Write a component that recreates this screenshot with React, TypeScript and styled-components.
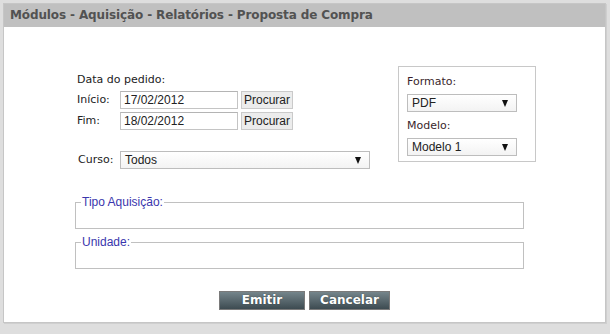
import React from 'react';
import styled, { createGlobalStyle } from 'styled-components';

const GlobalStyle = createGlobalStyle`
    html, body {
        margin: 0;
        padding: 0;
    }

    body {
        width: 610px;
        height: 334px;
        overflow: hidden;
        background: #dedede;
    }
`;

const Frame = styled.div`
    padding: 3px 4px 0 3px;
`;

const Window = styled.div`
    width: 601px;
    height: 318px;

    background: #fff;
    border: 1px solid #c6c6c6;
    box-shadow: 1px 1px 0 #cfcfcf;
`;

const Header = styled.header`
    height: 23px;
    padding-left: 6px;

    background: #c0c0c0;

    font-family: "DejaVu Sans", Verdana, sans-serif;
    font-weight: bold;
    font-size: 12px;
    letter-spacing: -0.12px;
    line-height: 23px;
    color: #525252;
`;

const Body = styled.div`
    padding-top: 39px;
`;

const TopRow = styled.div`
    display: flex;
    align-items: flex-start;
    gap: 28px;

    padding-left: 73px;
`;

const LeftColumn = styled.div`
    width: 293px;
    margin-top: 7px;
`;

const Label = styled.div<{ $tone?: string }>`
    font-family: "DejaVu Sans", Verdana, sans-serif;
    font-size: 11px;
    line-height: 14px;
    color: ${props => props.$tone || '#222'};
`;

const DateRow = styled.div<{ $gap: number }>`
    display: flex;
    align-items: center;

    height: 18px;
    margin-top: ${props => props.$gap}px;
`;

const RowLabel = styled(Label)`
    width: 43px;
    flex: none;
`;

const TextInput = styled.div`
    box-sizing: border-box;
    width: 118px;
    height: 18px;
    padding-left: 3px;

    background: #fff;
    border: 1px solid #c4c4c4;
    border-top-color: #b4b4b4;

    font-family: "Liberation Sans", Arial, sans-serif;
    font-size: 12px;
    line-height: 16px;
    color: #222;
`;

const SearchButton = styled.div`
    box-sizing: border-box;
    width: 52px;
    height: 18px;
    margin-left: 3px;

    background: #ececec;
    border: 1px solid #cacaca;

    font-family: "Liberation Sans", Arial, sans-serif;
    font-size: 12px;
    line-height: 16px;
    text-align: center;
    color: #222;
`;

const SelectBox = styled.div<{ $width: number }>`
    box-sizing: border-box;
    display: flex;
    align-items: center;
    justify-content: space-between;

    width: ${props => props.$width}px;
    height: 18px;
    padding: 0 8px 0 4px;

    background: linear-gradient(#fff, #f3f3f3);
    border: 1px solid #bdbdbd;

    font-family: "Liberation Sans", Arial, sans-serif;
    font-size: 12px;
    color: #222;
`;

const Arrow = styled.span`
    width: 0;
    height: 0;

    border-left: 3.5px solid transparent;
    border-right: 3.5px solid transparent;
    border-top: 7px solid #111;
`;

const CourseRow = styled(DateRow)`
    padding-left: 1px;
`;

const CourseLabel = styled(RowLabel)`
    width: 42px;
`;

const OptionsBox = styled.div`
    box-sizing: border-box;
    width: 138px;
    height: 96px;
    padding: 8px 0 0 8px;

    border: 1px solid #c8c8c8;
`;

const OptionsLabel = styled(Label)`
    margin-bottom: 5px;
`;

const OptionsGap = styled.div`
    height: 7px;
`;

const Groups = styled.div`
    display: flex;
    flex-direction: column;
    gap: 6px;

    margin-top: 26px;
    padding-left: 71px;
`;

const Group = styled.fieldset`
    box-sizing: border-box;
    width: 449px;
    margin: 0;
    padding: 0 5px;

    border: 1px solid #c0c0c0;
`;

const GroupLegend = styled.legend`
    padding: 0 1px;

    font-family: "Liberation Sans", Arial, sans-serif;
    font-size: 12px;
    line-height: 14px;
    color: #3a36ad;
`;

const GroupContent = styled.div`
    height: 19px;
`;

const Actions = styled.div`
    display: flex;
    justify-content: center;
    gap: 4px;

    margin-top: 22px;
`;

const ActionButton = styled.button<{ $width: number }>`
    box-sizing: border-box;
    width: ${props => props.$width}px;
    height: 19px;
    padding: 0;

    background: linear-gradient(#75858b, #3d4b51);
    border: 1px solid #7a7a7a;

    font-family: "DejaVu Sans", Verdana, sans-serif;
    font-weight: bold;
    font-size: 12px;
    line-height: 17px;
    color: #fff;
    text-shadow: 0 0 1px #2a3538;
`;

const dates = [
    { label: 'Início:', value: '17/02/2012', gap: 4 },
    { label: 'Fim:', value: '18/02/2012', gap: 3 },
];

const App: React.FC = () => {
    return (
        <>
            <GlobalStyle />
            <Frame>
                <Window>
                    <Header>Módulos - Aquisição - Relatórios - Proposta de Compra</Header>
                    <Body>
                        <TopRow>
                            <LeftColumn>
                                <Label>Data do pedido:</Label>
                                {dates.map(date => (
                                    <DateRow key={date.label} $gap={date.gap}>
                                        <RowLabel>{date.label}</RowLabel>
                                        <TextInput>{date.value}</TextInput>
                                        <SearchButton>Procurar</SearchButton>
                                    </DateRow>
                                ))}
                                <CourseRow $gap={21}>
                                    <CourseLabel>Curso:</CourseLabel>
                                    <SelectBox $width={250}>
                                        Todos
                                        <Arrow />
                                    </SelectBox>
                                </CourseRow>
                            </LeftColumn>
                            <OptionsBox>
                                <OptionsLabel $tone="#3a1f2c">Formato:</OptionsLabel>
                                <SelectBox $width={110}>
                                    PDF
                                    <Arrow />
                                </SelectBox>
                                <OptionsGap />
                                <OptionsLabel $tone="#3a1f2c">Modelo:</OptionsLabel>
                                <SelectBox $width={110}>
                                    Modelo 1
                                    <Arrow />
                                </SelectBox>
                            </OptionsBox>
                        </TopRow>
                        <Groups>
                            <Group>
                                <GroupLegend>Tipo Aquisição:</GroupLegend>
                                <GroupContent />
                            </Group>
                            <Group>
                                <GroupLegend>Unidade:</GroupLegend>
                                <GroupContent />
                            </Group>
                        </Groups>
                        <Actions>
                            <ActionButton $width={86}>Emitir</ActionButton>
                            <ActionButton $width={81}>Cancelar</ActionButton>
                        </Actions>
                    </Body>
                </Window>
            </Frame>
        </>
    );
};

export default App;
